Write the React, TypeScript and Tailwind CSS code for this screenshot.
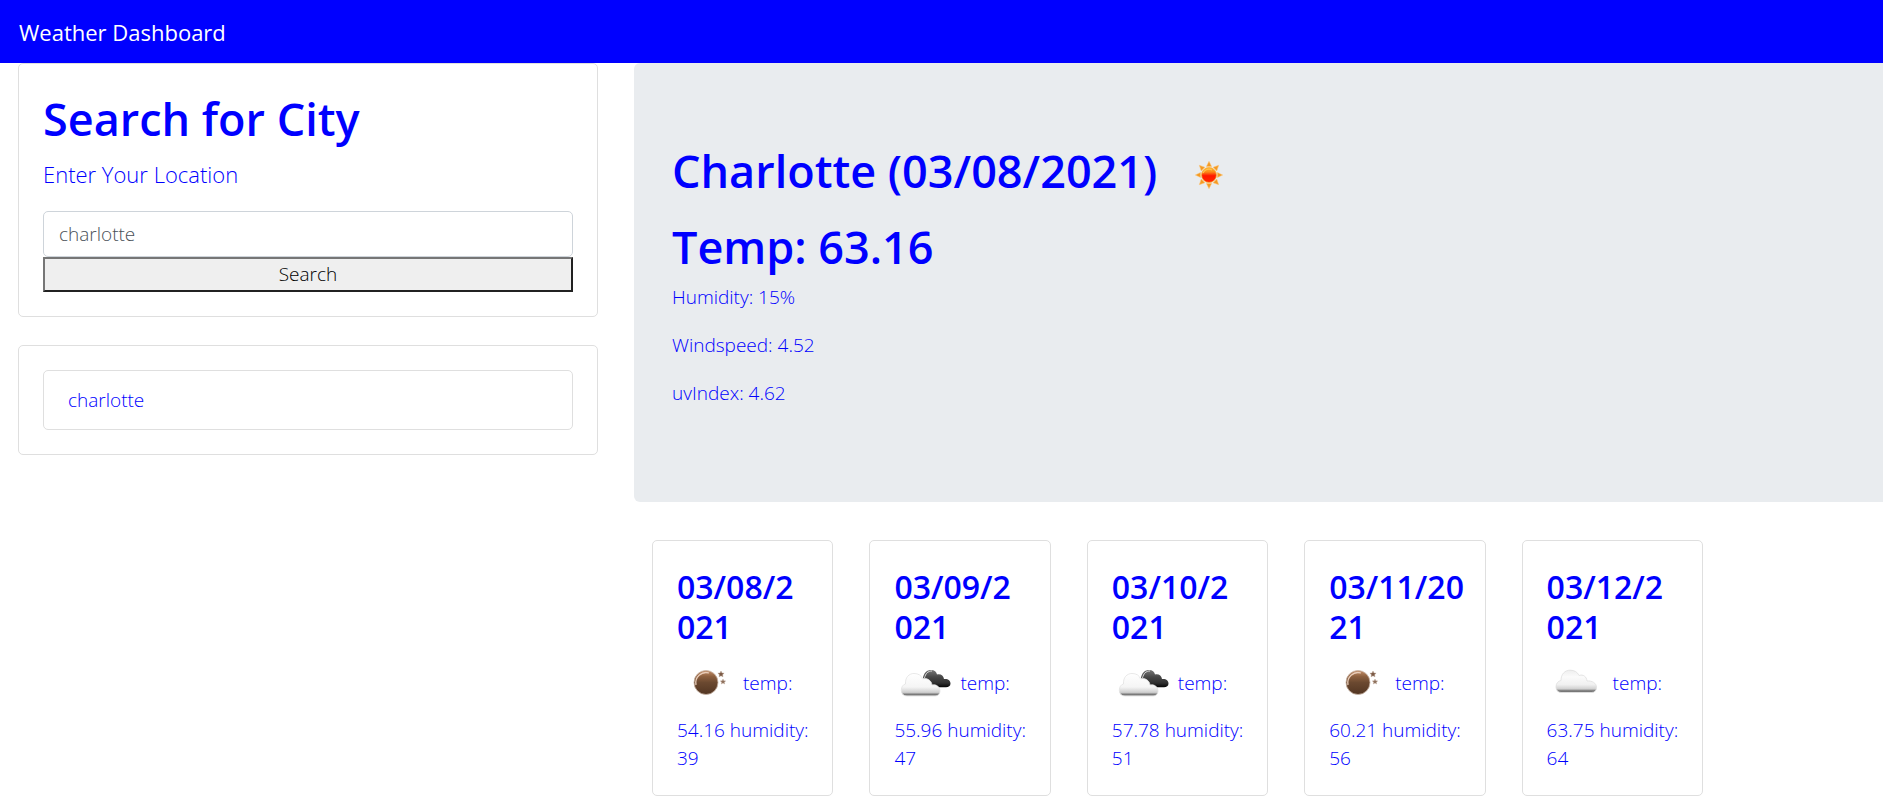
import { useState } from "react";

type Sky = "moon" | "broken" | "cloud";

interface Day {
  date: [string, string];
  sky: Sky;
  temp: string;
  humidity: number;
}

const days: Day[] = [
  { date: ["03/08/2", "021"], sky: "moon", temp: "54.16", humidity: 39 },
  { date: ["03/09/2", "021"], sky: "broken", temp: "55.96", humidity: 47 },
  { date: ["03/10/2", "021"], sky: "broken", temp: "57.78", humidity: 51 },
  { date: ["03/11/20", "21"], sky: "moon", temp: "60.21", humidity: 56 },
  { date: ["03/12/2", "021"], sky: "cloud", temp: "63.75", humidity: 64 },
];

function SunIcon() {
  return (
    <svg width="60" height="60" viewBox="0 -4 60 60" aria-hidden="true" className="shrink-0">
      <defs>
        <linearGradient id="sun" x1="0" y1="0" x2="0" y2="1">
          <stop offset="0" stopColor="#ffb52e" />
          <stop offset="0.3" stopColor="#fb8a1a" />
          <stop offset="0.55" stopColor="#ff1800" />
          <stop offset="1" stopColor="#ff2a00" />
        </linearGradient>
      </defs>
      {[0, 45, 90, 135, 180, 225, 270, 315].map((a) => (
        <path key={a} d="M30 16.3 L32.6 21.6 L27.4 21.6 Z" fill="#f59a22" stroke="#fbc67a" strokeWidth="0.5" transform={`rotate(${a} 30 30)`} />
      ))}
      <circle cx="30" cy="30" r="7.5" fill="url(#sun)" stroke="#fbb33c" strokeWidth="0.8" />
      <path d="M24 28 A6.3 6.3 0 0 1 33 25" fill="none" stroke="#ffc34c" strokeWidth="1.2" />
    </svg>
  );
}

function MoonIcon({ id }: { id: string }) {
  return (
    <svg width="60" height="60" viewBox="0 0 60 60" aria-hidden="true" className="shrink-0">
      <defs>
        <linearGradient id={id} x1="0" y1="0" x2="0" y2="1">
          <stop offset="0" stopColor="#c48e68" />
          <stop offset="0.25" stopColor="#8d603f" />
          <stop offset="0.5" stopColor="#6b4930" />
          <stop offset="1" stopColor="#523522" />
        </linearGradient>
      </defs>
      <circle cx="29" cy="29.5" r="12" fill={`url(#${id})`} stroke="#c9b5a6" strokeWidth="0.8" />
      <path d="M19 32 A10.3 10.3 0 0 1 32 20" fill="none" stroke="#e9cdb9" strokeWidth="1.3" />
      <path d="M44 18 l.9 2 2.2.2 -1.6 1.5 .5 2.1 -2-1 -2 1 .5-2.1 -1.6-1.5 2.2-.2z" fill="#7b5a45" stroke="#b49a88" strokeWidth="0.4" />
      <path d="M46 26 l.8 1.7 1.9.2 -1.4 1.3 .4 1.8 -1.7-.9 -1.7.9 .4-1.8 -1.4-1.3 1.9-.2z" fill="#8e705c" stroke="#c0aa9b" strokeWidth="0.4" />
    </svg>
  );
}

function BrokenCloudsIcon({ id }: { id: string }) {
  return (
    <svg width="60" height="60" viewBox="0 0 60 60" aria-hidden="true" className="shrink-0">
      <defs>
        <linearGradient id={`${id}d`} x1="0" y1="0" x2="0" y2="1">
          <stop offset="0" stopColor="#777" />
          <stop offset="0.4" stopColor="#484848" />
          <stop offset="0.75" stopColor="#303030" />
          <stop offset="1" stopColor="#050505" />
        </linearGradient>
        <linearGradient id={`${id}l`} x1="0" y1="0" x2="0" y2="1">
          <stop offset="0" stopColor="#fff" />
          <stop offset="0.6" stopColor="#f5f5f5" />
          <stop offset="0.84" stopColor="#cfcfcf" />
          <stop offset="0.93" stopColor="#777" />
          <stop offset="1" stopColor="#aaa" />
        </linearGradient>
      </defs>
      <path d="M29 25 C30 19.5 33 17 37 17 C40.5 17 42.5 19 43 21.5 C46.5 20.5 49.5 22.5 50 26 C54 25.5 56.500 27.500 56.500 30.500 C56.500 33 54.500 34.300 52 34.300 H38 Z" fill={`url(#${id}d)`} />
      <path d="M30.500 25 C31.500 20.500 34 18 38 18" fill="none" stroke="#d8d8d8" strokeWidth="1" />
      <path d="M13 43 C9.500 43 7.300 40.500 7.300 37.500 C7.300 34 9 31.500 11.500 31 C11 24.500 15 20.500 20 20.500 C24.500 20.500 27.500 22.500 28.500 26 C33 24.500 37.500 27.500 38 32 C42.500 31 46 34 46 38 C46 41 44 43 41 43 Z" fill={`url(#${id}l)`} stroke="#e2e2e2" strokeWidth="0.8" />
    </svg>
  );
}

function CloudIcon({ id }: { id: string }) {
  return (
    <svg width="60" height="60" viewBox="0 0 60 60" aria-hidden="true" className="shrink-0">
      <defs>
        <linearGradient id={id} x1="0" y1="0" x2="0" y2="1">
          <stop offset="0" stopColor="#eee" />
          <stop offset="0.3" stopColor="#fbfbfb" />
          <stop offset="0.65" stopColor="#f0f0f0" />
          <stop offset="0.84" stopColor="#d0d0d0" />
          <stop offset="0.94" stopColor="#666" />
          <stop offset="1" stopColor="#aaa" />
        </linearGradient>
      </defs>
      <path d="M14 39.500 C11 39.500 9 37 9 34 C9 30.500 11 28 14 27.500 C14 21 18 17.200 23 17.200 C27.500 17.200 30.500 19 32 22.500 C36 21 39.500 23.500 40 28 C45 27.500 49.500 30 49.500 34.500 C49.500 37.500 47.500 39.500 44.500 39.500 Z" fill={`url(#${id})`} stroke="#dedede" strokeWidth="0.8" />
    </svg>
  );
}

function SkyIcon({ sky, id }: { sky: Sky; id: string }) {
  if (sky === "moon") return <MoonIcon id={id} />;
  if (sky === "broken") return <BrokenCloudsIcon id={id} />;
  return <CloudIcon id={id} />;
}

function DayCard({ day, id }: { day: Day; id: string }) {
  return (
    <article className="rounded-[5px] border border-[#dfdfdf] px-6 pt-[26px] pb-[23px]">
      <h3 className="mb-[6px] text-[32px] leading-10 font-semibold whitespace-nowrap">
        {day.date[0]}
        <br />
        {day.date[1]}
      </h3>
      <div className="flex items-center gap-[6px]">
        <SkyIcon sky={day.sky} id={id} />
        <p>temp:</p>
      </div>
      <p className="mt-[3px] whitespace-nowrap">
        {day.temp} humidity:
        <br />
        {day.humidity}
      </p>
    </article>
  );
}

export default function App() {
  const [city, setCity] = useState("charlotte");
  return (
    <div className="min-h-screen overflow-x-hidden bg-white font-['Segoe_UI','Open_Sans',sans-serif] text-[19px] leading-7 font-light text-[#0000ff]">
      <nav className="flex h-[63px] items-center bg-[#0000ff] px-[19px]">
        <a href="#" className="text-[22px] font-normal text-white">Weather Dashboard</a>
      </nav>

      <main className="grid grid-cols-[580fr_1249fr] items-start gap-9 pl-[18px]">
        <aside className="flex flex-col gap-7">
          <form onSubmit={(e) => e.preventDefault()} className="flex flex-col rounded-[5px] border border-[#dfdfdf] px-6 pt-[26px] pb-6">
            <h1 className="mb-[9px] text-[45px] leading-[57px] font-semibold">Search for City</h1>
            <label htmlFor="city" className="mb-[19px] text-[22px] leading-9">Enter Your Location</label>
            <input
              id="city"
              type="text"
              value={city}
              onChange={(e) => setCity(e.target.value)}
              className="h-[46px] w-full rounded-[5px] border border-[#ced4da] bg-white px-[15px] text-[#495057] outline-none"
            />
            <button type="submit" className="h-[35px] w-full border-2 border-t-[#767676] border-r-[#212121] border-b-[#212121] border-l-[#767676] bg-[#efefef] leading-none text-black">
              Search
            </button>
          </form>

          <section aria-label="Search history" className="rounded-[5px] border border-[#dfdfdf] p-6">
            <ul>
              <li className="rounded-[5px] border border-[#dfdfdf] px-6 py-[15px]">charlotte</li>
            </ul>
          </section>
        </aside>

        <div>
          <section className="rounded-l-[6px] bg-[#e9ecef] px-[38px] pt-[78px] pb-[95px]">
            <h1 className="flex items-center gap-[22px] text-[45px] leading-[60px] font-semibold whitespace-nowrap">
              Charlotte (03/08/2021)
              <SunIcon />
            </h1>
            <h1 className="mt-4 mb-[6px] text-[45px] leading-[60px] font-semibold">Temp: 63.16</h1>
            <div className="flex flex-col gap-5">
              <p>Humidity: 15%</p>
              <p>Windspeed: 4.52</p>
              <p>uvIndex: 4.62</p>
            </div>
          </section>

          <section aria-label="Forecast" className="mt-[38px] ml-[18px] grid max-w-[1051px] grid-cols-5 gap-9">
            {days.map((day, i) => (
              <DayCard key={day.date.join("")} day={day} id={`sky${i}`} />
            ))}
          </section>
        </div>
      </main>
    </div>
  );
}
